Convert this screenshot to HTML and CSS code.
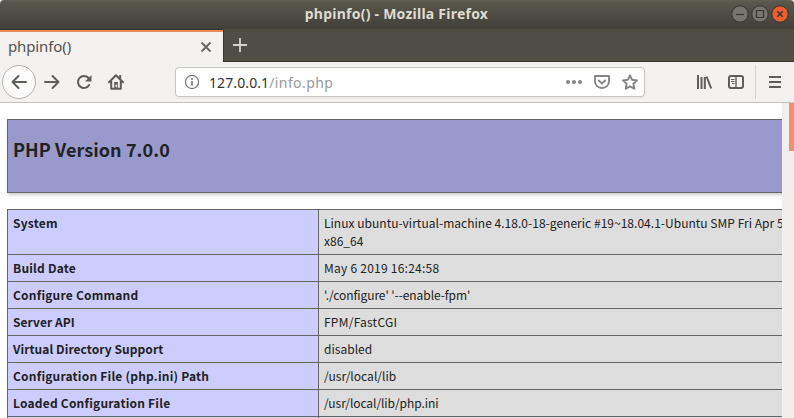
FILE: index.html
```html
<!DOCTYPE html>
<html lang="en">
<head>
<meta charset="utf-8">
<title>phpinfo()</title>
<link rel="stylesheet" href="styles.css">
</head>
<body>
<div class="window">
  <header class="titlebar">
    <span class="title">phpinfo() - Mozilla Firefox</span>
    <div class="controls">
      <svg class="control" viewBox="0 0 18 18"><circle cx="9" cy="9" r="8.2"/><path d="M5 9.5h8"/></svg>
      <svg class="control" viewBox="0 0 18 18"><circle cx="9" cy="9" r="8.2"/><path d="M5.5 5.5h7v7h-7z"/></svg>
      <svg class="control close" viewBox="0 0 18 18"><circle cx="9" cy="9" r="8.2"/><path d="M6.3 6.3l5.4 5.4M11.7 6.3l-5.4 5.4"/></svg>
    </div>
  </header>
  <div class="tabs">
    <div class="tab">
      <span class="tab-label">phpinfo()</span>
      <svg class="tab-close" viewBox="0 0 12 12"><path d="M1.5 1.5l9 9M10.5 1.5l-9 9"/></svg>
    </div>
    <svg class="new-tab" viewBox="0 0 14 14"><path d="M7 0v14M0 7h14"/></svg>
  </div>
  <nav class="toolbar">
    <div class="back"><svg class="icon" viewBox="0 0 16 16"><path d="M15 8H1.5M7.5 2l-6 6 6 6"/></svg></div>
    <svg class="icon forward" viewBox="0 0 16 16"><path d="M1 8h13.5M8.5 2l6 6-6 6"/></svg>
    <svg class="icon reload" viewBox="0 0 16 16"><path d="M13.2 11A6 6 0 1 1 12.5 4"/><path class="solid" d="M15.5 1v6.6H9z"/></svg>
    <svg class="icon home" viewBox="0 0 16 16"><path d="M1 8.3l7-7 7 7M3.2 7.5v7.2h9.6V7.5"/><path class="solid" d="M6.2 8h3.6v7H6.2zM11.2 1h2v4h-2z"/><path class="knob" d="M8.2 11.2v1.4"/></svg>
    <div class="urlbar">
      <svg class="info" viewBox="0 0 16 16"><circle cx="8" cy="8" r="6.6"/><path d="M8 7v4.5M8 4v1.8"/></svg>
      <span class="url">127.0.0.1<span class="path">/info.php</span></span>
      <svg class="dots" viewBox="0 0 16 16"><circle cx="2" cy="8" r="2"/><circle cx="8" cy="8" r="2"/><circle cx="14" cy="8" r="2"/></svg>
      <svg class="pocket" viewBox="0 0 16 16"><path d="M1 2h14v5.5a7 6.5 0 0 1-14 0zM4.3 6l3.7 3.5L11.7 6"/></svg>
      <svg class="star" viewBox="0 0 16 16"><path d="M8 1.3l2.1 4.5 4.9.6-3.6 3.4.9 4.9L8 12.3l-4.3 2.4.9-4.9L1 6.4l4.9-.6z"/></svg>
    </div>
    <svg class="icon library" viewBox="0 0 16 16"><path d="M2 1v14M5.5 3v12M8.8 3v12M10.5 2.5l4.7 12"/></svg>
    <svg class="icon sidebar" viewBox="0 0 16 16"><rect x="1" y="2" width="14" height="12" rx="2"/><path class="divider" d="M8 2v12"/><path class="thin" d="M3 5.5h3.5M3 7.5h3.5M4 9.5h2.5"/></svg>
    <div class="separator"></div>
    <svg class="icon menu" viewBox="0 0 16 16"><path d="M2 3h12M2 8h12M2 13h12"/></svg>
  </nav>
  <div class="viewport">
    <main class="page">
      <div class="banner"><h1>PHP Version 7.0.0</h1></div>
      <table class="info-table">
        <tr><th>System</th><td>Linux ubuntu-virtual-machine 4.18.0-18-generic #19~18.04.1-Ubuntu SMP Fri Apr 5<br>x86_64</td></tr>
        <tr><th>Build Date</th><td class="loose">May 6 2019 16:24:58</td></tr>
        <tr><th>Configure Command</th><td class="tight">'./configure' '--enable-fpm'</td></tr>
        <tr><th class="plain">Server API</th><td class="loose">FPM/FastCGI</td></tr>
        <tr><th class="plain">Virtual Directory Support</th><td>disabled</td></tr>
        <tr><th>Configuration File (php.ini) Path</th><td>/usr/local/lib</td></tr>
        <tr><th>Loaded Configuration File</th><td class="tight">/usr/local/lib/php.ini</td></tr>
        <tr><th>&nbsp;</th><td>&nbsp;</td></tr>
      </table>
    </main>
    <div class="scrollbar"><div class="thumb"></div></div>
  </div>
</div>
</body>
</html>
```
FILE: styles.css
```css
* { box-sizing: border-box; }
body { margin: 0; background: #fff; }
svg { display: block; flex: none; fill: none; }
.window {
  display: flex; flex-direction: column;
  width: 794px; height: 418px; overflow: hidden;
  font-family: "Noto Sans", "Open Sans", sans-serif;
}
.titlebar {
  display: grid; grid-template-columns: 1fr auto 1fr; align-items: center;
  height: 29px; flex: none; padding: 0 5px 1px 0;
  background: linear-gradient(#625f54, #5a574d 2px, #403f39);
  border-radius: 4px 4px 0 0;
}
.title { grid-column: 2; margin-left: 4px; color: #dfdbd2; font-size: 14px; font-weight: 700; line-height: 20px; letter-spacing: 0.24px; white-space: nowrap; }
.controls { display: flex; gap: 2px; justify-content: flex-end; }
.control { width: 18px; height: 18px; }
.control circle { fill: #77756d; stroke: #35342f; }
.control path { stroke: #35342f; stroke-width: 1.2; }
.control.close circle { fill: #ee5e30; }
.control.close path { stroke-width: 1.5; }
.tabs {
  display: flex; align-items: center; height: 33px; flex: none;
  background: #504d45; box-shadow: inset 0 -1px #37332f;
}
.tab {
  display: flex; align-items: center; justify-content: space-between;
  width: 223px; height: 32px; align-self: flex-end; padding: 0 11px 0 8px;
  background: #f3f2f1; border-top: 2px solid #f08a5b;
  box-shadow: 1px 0 #37332f, 0 -1px #37332f;
}
.tab-label { padding-bottom: 2px; color: #55534f; font-size: 15px; line-height: 20px; letter-spacing: -0.12px; }
.tab-close { width: 12px; height: 12px; margin-bottom: 1px; stroke: #666461; stroke-width: 1.8; }
.new-tab { width: 14px; height: 14px; margin: 0 0 1px 10px; stroke: #d4d1cc; stroke-width: 1.8; }
.toolbar {
  display: flex; align-items: center; height: 41px; flex: none; padding-left: 2px;
  background: #f3f2f1; border-bottom: 1px solid #c6c3bf;
}
.icon { width: 16px; height: 16px; stroke: #5f5e5b; stroke-width: 2; stroke-linecap: round; stroke-linejoin: round; }
.solid { fill: #5f5e5b; stroke: none; }
.back {
  display: grid; place-items: center; width: 34px; height: 34px;
  border: 1px solid #b5b2ae; border-radius: 50%; background: #fcfcfc;
}
.forward { margin-left: 8px; }
.reload { margin-left: 16px; }
.home { margin-left: 16px; }
.knob { stroke: #f3f2f1; stroke-width: 1.4; }
.urlbar {
  display: flex; align-items: center; width: 470px; height: 30px; margin-left: 51px; padding: 0 6px 0 8px;
  background: #fff; border: 1px solid #c8c5c1; border-radius: 4px; box-shadow: 0 1px 2px #00000012;
}
.info { width: 16px; height: 16px; stroke: #777; stroke-width: 1.2; }
.info path { stroke-width: 1.7; }
.url { flex: 1; margin-left: 9px; padding-top: 2px; color: #333; font-size: 14px; line-height: 20px; letter-spacing: 0.1px; }
.path { color: #999; letter-spacing: 0.4px; }
.dots { width: 16px; height: 16px; fill: #858585; }
.pocket, .star { width: 16px; height: 16px; margin-left: 12px; stroke: #858585; stroke-width: 1.9; stroke-linejoin: round; }
.library { margin-left: 51px; stroke-linecap: butt; }
.sidebar { margin-left: 16px; }
.sidebar .divider { stroke-width: 1.4; }
.sidebar .thin { stroke-width: 1; stroke-linecap: butt; }
.separator { width: 1px; height: 34px; margin-left: 11px; background: #d5d2cf; }
.menu { margin-left: 11px; stroke-linecap: butt; }
.viewport { display: flex; flex: 1; min-height: 0; background: #fff; }
.page {
  width: 782px; padding: 16px 0 0 7px; overflow: hidden;
  color: #222; font-family: "Noto Sans CJK SC", sans-serif; font-size: 12px; line-height: 18px;
}
.banner {
  width: 934px; height: 74px; padding: 16px 5px;
  background: #9999cc; border: 1px solid #666; box-shadow: 1px 2px 3px #ccc;
}
h1 { margin: 0; font-size: 18px; line-height: 27px; font-weight: 700; letter-spacing: 0.08px; }
.info-table {
  width: 934px; margin-top: 16px; table-layout: fixed; border-collapse: collapse;
}
th, td { padding: 4px 5px; border: 1px solid #666; text-align: left; vertical-align: top; white-space: nowrap; }
th { width: 311px; background: #ccccff; font-weight: 700; letter-spacing: 0.21px; }
th.plain { letter-spacing: 0.06px; }
td { background: #ddd; letter-spacing: 0.025px; }
td.loose { letter-spacing: 0.24px; }
td.tight { letter-spacing: -0.07px; }
.scrollbar { width: 12px; background: #f1f0ef; }
.thumb { width: 5px; height: 48px; margin-left: 7px; background: #f58f68; }
```
